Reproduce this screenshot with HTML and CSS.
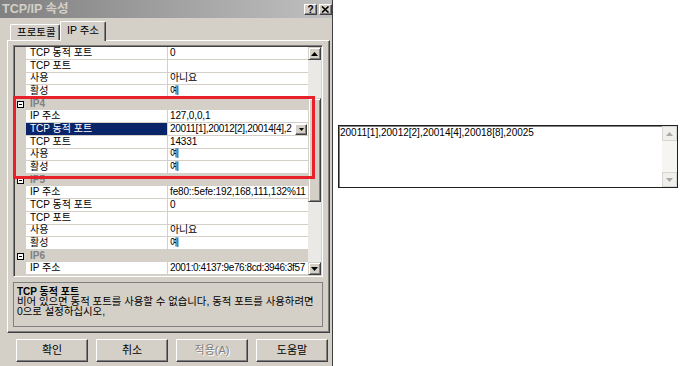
FILE: index.html
```html
<!DOCTYPE html>
<html>

<head>
    <title>TCP/IP 속성</title>
    <link rel="stylesheet" href="styles.css">
</head>

<body>
    <div class="dialog">
        <div class="titlebar">
            <span class="title">TCP/IP 속성</span>
            <div class="caption-buttons">
                <div class="cap-btn">?</div>
                <div class="cap-btn">
                    <svg width="9" height="7" viewBox="0 0 9 7"><path d="M1 0.5 L7.5 6.5 M7.5 0.5 L1 6.5" stroke="#000" stroke-width="1.6"/></svg>
                </div>
            </div>
        </div>

        <div class="tabs">
            <div class="tab">프로토콜</div>
            <div class="tab active">IP 주소</div>
        </div>

        <div class="panel">
            <div class="grid">
                <div class="rows">
                    <div class="row"><div class="gutter"></div><div class="name">TCP 동적 포트</div><div class="value">0</div></div>
                    <div class="row"><div class="gutter"></div><div class="name">TCP 포트</div><div class="value"></div></div>
                    <div class="row"><div class="gutter"></div><div class="name">사용</div><div class="value">아니요</div></div>
                    <div class="row"><div class="gutter"></div><div class="name">활성</div><div class="value">예</div></div>

                    <div class="row cat"><div class="gutter"><svg class="toggle" width="7" height="7" viewBox="0 0 7 7"><rect x="0.5" y="0.5" width="6" height="6" fill="#fff" stroke="#000"/><path d="M2 3.5 H5" stroke="#000"/></svg></div><div class="name">IP4</div></div>
                    <div class="row"><div class="gutter"></div><div class="name">IP 주소</div><div class="value">127,0,0,1</div></div>
                    <div class="row sel"><div class="gutter"></div><div class="name">TCP 동적 포트</div>
                        <div class="value combo"><span class="combo-text">20011[1],20012[2],20014[4],2</span><div class="drop"><svg width="5" height="3" viewBox="0 0 5 3"><path d="M0 0 H5 L2.5 3 Z" fill="#000"/></svg></div></div>
                    </div>
                    <div class="row"><div class="gutter"></div><div class="name">TCP 포트</div><div class="value">14331</div></div>
                    <div class="row"><div class="gutter"></div><div class="name">사용</div><div class="value">예</div></div>
                    <div class="row"><div class="gutter"></div><div class="name">활성</div><div class="value">예</div></div>

                    <div class="row cat"><div class="gutter"><svg class="toggle" width="7" height="7" viewBox="0 0 7 7"><rect x="0.5" y="0.5" width="6" height="6" fill="#fff" stroke="#000"/><path d="M2 3.5 H5" stroke="#000"/></svg></div><div class="name">IP5</div></div>
                    <div class="row"><div class="gutter"></div><div class="name">IP 주소</div><div class="value">fe80::5efe:192,168,111,132%11</div></div>
                    <div class="row"><div class="gutter"></div><div class="name">TCP 동적 포트</div><div class="value">0</div></div>
                    <div class="row"><div class="gutter"></div><div class="name">TCP 포트</div><div class="value"></div></div>
                    <div class="row"><div class="gutter"></div><div class="name">사용</div><div class="value">아니요</div></div>
                    <div class="row"><div class="gutter"></div><div class="name">활성</div><div class="value">예</div></div>

                    <div class="row cat"><div class="gutter"><svg class="toggle" width="7" height="7" viewBox="0 0 7 7"><rect x="0.5" y="0.5" width="6" height="6" fill="#fff" stroke="#000"/><path d="M2 3.5 H5" stroke="#000"/></svg></div><div class="name">IP6</div></div>
                    <div class="row"><div class="gutter"></div><div class="name">IP 주소</div><div class="value tight">2001:0:4137:9e76:8cd:3946:3f57</div></div>
                </div>

                <div class="vscroll">
                    <div class="sbtn"><svg width="7" height="4" viewBox="0 0 7 4"><path d="M3.5 0 L7 4 H0 Z" fill="#000"/></svg></div>
                    <div class="track"><div class="thumb"></div></div>
                    <div class="sbtn"><svg width="7" height="4" viewBox="0 0 7 4"><path d="M0 0 H7 L3.5 4 Z" fill="#000"/></svg></div>
                </div>
            </div>

            <div class="desc">
                <div class="desc-title">TCP 동적 포트</div>
                <div class="desc-text">비어 있으면 동적 포트를 사용할 수 없습니다, 동적 포트를 사용하려면<br>0으로 설정하십시오,</div>
            </div>
        </div>

        <div class="buttons">
            <div class="btn">확인</div>
            <div class="btn">취소</div>
            <div class="btn disabled">적용(A)</div>
            <div class="btn">도움말</div>
        </div>

        <!-- red marker drawn over the IP4 group -->
        <div class="highlight"></div>
    </div>

    <!-- expanded value of the selected property -->
    <div class="editbox">
        <div class="edit-text">20011[1],20012[2],20014[4],20018[8],20025</div>
        <div class="edit-scroll">
            <div class="ebtn"><svg width="7" height="4" viewBox="0 0 7 4"><path d="M3.5 0 L7 4 H0 Z" fill="#a8a8a8"/></svg></div>
            <div class="etrack"></div>
            <div class="ebtn"><svg width="7" height="4" viewBox="0 0 7 4"><path d="M0 0 H7 L3.5 4 Z" fill="#a8a8a8"/></svg></div>
        </div>
    </div>
</body>
</html>
```

FILE: styles.css
```css
body {
    margin: 0;
    background-color: #ffffff;
    font-family: "Liberation Sans", "Noto Sans CJK KR", sans-serif;
    font-size: 10px;
    color: #000000;
    display: flex;
    align-items: flex-start;
}

.dialog {
    position: relative;
    width: 333px;
    height: 366px;
    box-sizing: border-box;
    background-color: #d4d0c8;
    border-right: 1px solid #404040;
    display: flex;
    flex-direction: column;
    overflow: hidden;
}

/* title bar */
.titlebar {
    height: 18px;
    flex: none;
    background: linear-gradient(to right, #808080, #c0c0c0);
    display: flex;
    align-items: center;
    justify-content: space-between;
    padding-left: 2px;
}

.title {
    color: #d4d0c8;
    font-weight: bold;
    font-size: 12.5px;
    line-height: 18px;
}

.caption-buttons {
    display: flex;
    gap: 2px;
}

.cap-btn {
    width: 13px;
    height: 11px;
    box-sizing: border-box;
    background-color: #d4d0c8;
    border: 1px solid;
    border-color: #ffffff #404040 #404040 #ffffff;
    box-shadow: inset -1px -1px #808080;
    font-size: 10px;
    font-weight: bold;
    line-height: 9px;
    text-align: center;
    display: flex;
    align-items: center;
    justify-content: center;
}

/* tabs */
.tabs {
    height: 22px;
    flex: none;
    display: flex;
    align-items: flex-end;
    padding-left: 10px;
    position: relative;
    z-index: 1;
}

.tab {
    width: 50px;
    height: 16px;
    box-sizing: border-box;
    border: 1px solid;
    border-color: #ffffff #404040 transparent #ffffff;
    border-bottom: none;
    border-radius: 2px 2px 0 0;
    box-shadow: inset -1px 0 #808080;
    padding-left: 6px;
    font-size: 10.5px;
    line-height: 15px;
}

.tab.active {
    width: 46px;
    height: 20px;
    margin-bottom: -1px;
    background-color: #d4d0c8;
    line-height: 17px;
}

.panel {
    margin-left: 7px;
    width: 323px;
    height: 293px;
    flex: none;
    box-sizing: border-box;
    border: 1px solid;
    border-color: #ffffff #404040 #404040 #ffffff;
    box-shadow: inset -1px -1px #808080;
    padding: 4px 0 0 5px;
}

/* property grid */
.grid {
    width: 310px;
    height: 232px;
    box-sizing: border-box;
    border: 1px solid;
    border-color: #808080 #ffffff #ffffff #808080;
    box-shadow: inset 1px 1px #404040, inset -1px -1px #d4d0c8;
    padding: 1px;
    display: flex;
}

.rows {
    flex: 1;
    display: flex;
    flex-direction: column;
    overflow: hidden;
    background-color: #ffffff;
}

.row {
    display: grid;
    grid-template-columns: 11px 141px 1fr;
    height: calc(228px / 18);
    flex: none;
    line-height: 12px;
}

.gutter {
    background-color: #d4d0c8;
}

.name {
    padding-left: 4px;
    border-bottom: 1px solid #d4d0c8;
    white-space: nowrap;
}

.value {
    padding-left: 2px;
    border-left: 1px solid #d4d0c8;
    border-bottom: 1px solid #d4d0c8;
    white-space: nowrap;
    overflow: hidden;
    letter-spacing: -0.15px;
}

.value.tight {
    letter-spacing: -0.4px;
}

.row.cat {
    grid-template-columns: 11px 1fr;
    background-color: #d4d0c8;
    color: #808080;
    font-weight: bold;
}

.row.cat .name {
    border-bottom: none;
}

.toggle {
    display: block;
    margin: 3px 0 0 2px;
}

.row.sel .name {
    background-color: #0a246a;
    color: #ffffff;
}

.value.combo {
    display: flex;
    padding-right: 1px;
    letter-spacing: -0.3px;
}

.combo-text {
    flex: 1;
    overflow: hidden;
}

.drop {
    width: 12px;
    height: 11px;
    margin-top: 1px;
    box-sizing: border-box;
    flex: none;
    background-color: #d4d0c8;
    border: 1px solid;
    border-color: #ffffff #404040 #404040 #ffffff;
    box-shadow: inset -1px -1px #808080;
    display: flex;
    align-items: center;
    justify-content: center;
}

.vscroll {
    width: 13px;
    flex: none;
    display: flex;
    flex-direction: column;
    background-color: #ebe9e5;
}

.sbtn,
.thumb {
    box-sizing: border-box;
    background-color: #d4d0c8;
    border: 1px solid;
    border-color: #d4d0c8 #404040 #404040 #d4d0c8;
    box-shadow: inset 1px 1px #ffffff, inset -1px -1px #808080;
}

.sbtn {
    height: 13px;
    flex: none;
    display: flex;
    align-items: center;
    justify-content: center;
}

.track {
    flex: 1;
}

.thumb {
    margin-top: 38px;
    height: 104px;
}

/* description pane */
.desc {
    margin-top: 5px;
    width: 310px;
    height: 45px;
    box-sizing: border-box;
    border: 1px solid #808080;
    padding: 3px 3px;
}

.desc-title {
    font-weight: bold;
    line-height: 11px;
}

.desc-text {
    font-size: 10.4px;
    line-height: 10px;
}

.buttons {
    display: flex;
    gap: 8px;
    padding-left: 16px;
    margin-top: 6px;
}

.btn {
    width: 72px;
    height: 23px;
    box-sizing: border-box;
    border: 1px solid;
    border-color: #ffffff #404040 #404040 #ffffff;
    box-shadow: inset -1px -1px #808080;
    font-size: 11px;
    line-height: 20px;
    text-align: center;
}

.btn.disabled {
    color: #808080;
    text-shadow: 1px 1px #ffffff;
}

.highlight {
    position: absolute;
    left: 13px;
    top: 96px;
    width: 302px;
    height: 83px;
    box-sizing: border-box;
    border: 3px solid #e8202a;
}

/* expanded value editor */
.editbox {
    margin: 125px 0 0 5px;
    width: 340px;
    height: 63px;
    box-sizing: border-box;
    border: 1px solid #202020;
    box-shadow: inset 1px 1px #808080;
    background-color: #ffffff;
    display: flex;
}

.edit-text {
    flex: 1;
    padding: 1px 0 0 1px;
    line-height: 11px;
    white-space: nowrap;
}

.edit-scroll {
    width: 15px;
    flex: none;
    display: flex;
    flex-direction: column;
    background-color: #f6f5f1;
}

.ebtn {
    height: 15px;
    flex: none;
    box-sizing: border-box;
    background-color: #f0efeb;
    border: 1px solid #d8d6d0;
    display: flex;
    align-items: center;
    justify-content: center;
}

.etrack {
    flex: 1;
}
```
